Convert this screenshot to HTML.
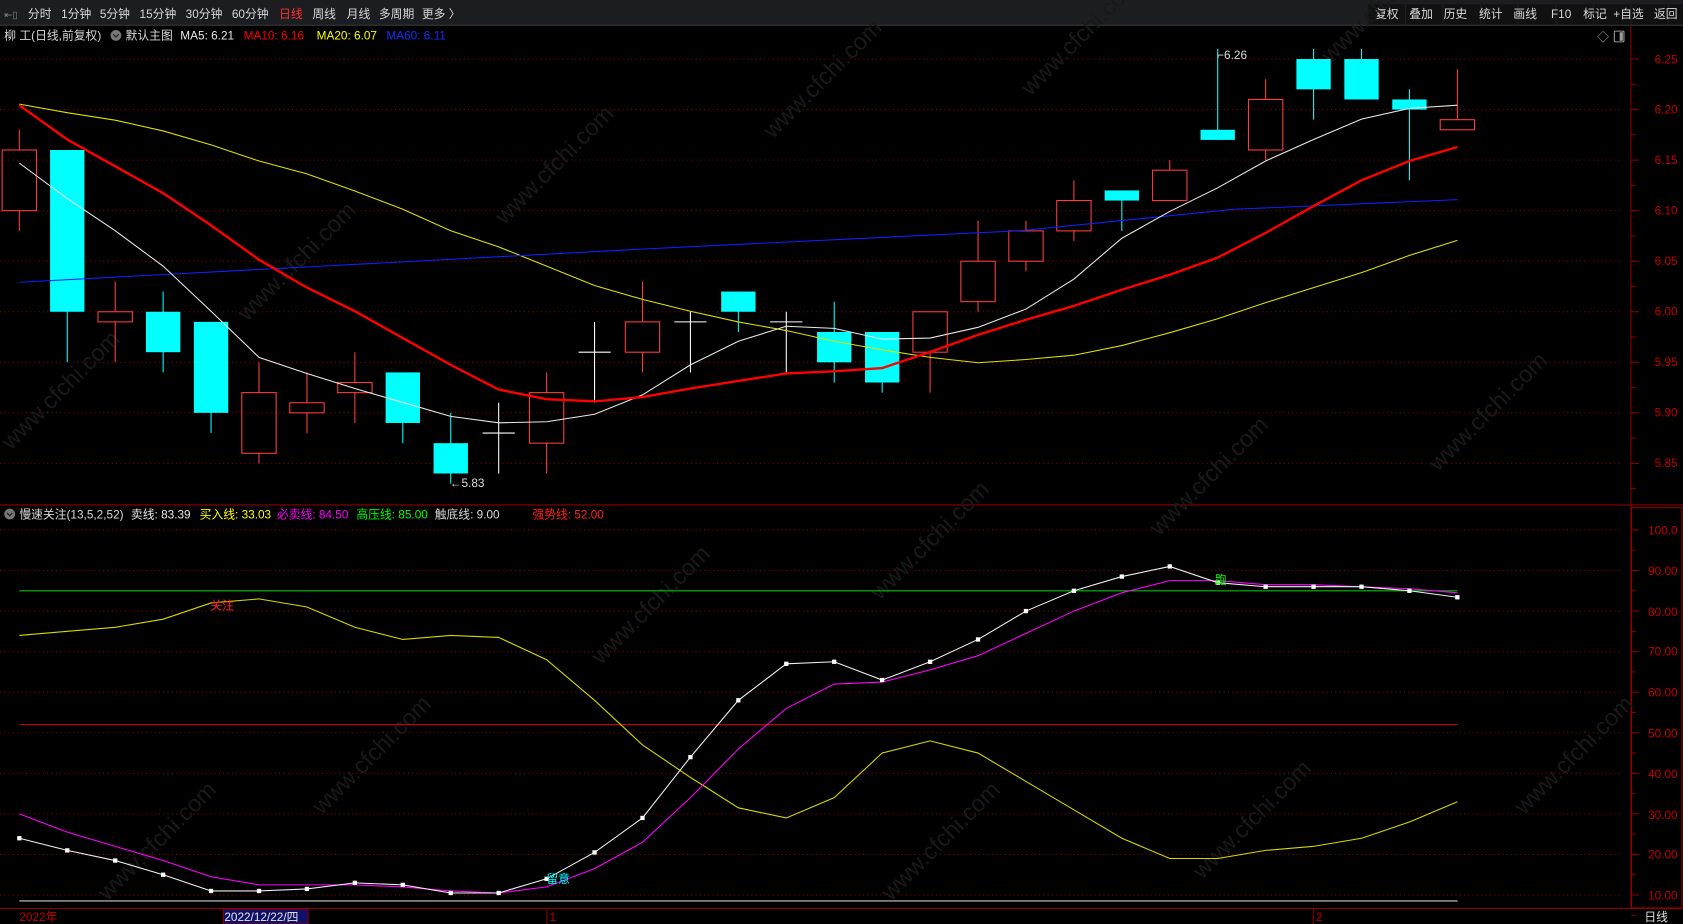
<!DOCTYPE html>
<html><head><meta charset="utf-8"><style>
html,body{margin:0;padding:0;background:#000;width:1683px;height:924px;overflow:hidden}
svg{display:block;overflow:hidden}
text{font-family:"Liberation Sans","Noto Sans CJK SC",sans-serif}
</style></head><body>
<svg id="s" width="1683" height="924" viewBox="0 0 1568 861" preserveAspectRatio="none" xmlns="http://www.w3.org/2000/svg">
<rect x="0" y="0" width="1568" height="861" fill="#000"/>
<rect x="0" y="0" width="1568" height="23" fill="#1c1d21"/>
<line x1="0" y1="23.5" x2="1568" y2="23.5" stroke="#3a3a3a"/>
<g fill="#111">
<rect x="1275" y="4" width="34" height="19"/><rect x="1310" y="4" width="34" height="19"/><rect x="1345" y="4" width="34" height="19"/><rect x="1380" y="4" width="34" height="19"/><rect x="1415" y="4" width="34" height="19"/><rect x="1450" y="4" width="34" height="19"/><rect x="1485" y="4" width="34" height="19"/><rect x="1520" y="4" width="34" height="19"/><rect x="1555" y="4" width="13" height="19"/>
</g>
<g font-size="11" fill="#d8d8d8">
<text x="4" y="17" fill="#888" font-size="9">⇤▯</text>
<text x="26" y="17">分时</text><text x="57" y="17">1分钟</text><text x="93" y="17">5分钟</text><text x="130" y="17">15分钟</text><text x="173" y="17">30分钟</text><text x="216" y="17">60分钟</text>
<text x="260" y="17" fill="#ff3030">日线</text><text x="291" y="17">周线</text><text x="323" y="17">月线</text><text x="353" y="17">多周期</text><text x="393" y="17">更多 〉</text>
<text x="1281" y="17">复权</text><text x="1313" y="17">叠加</text><text x="1345" y="17">历史</text><text x="1378" y="17">统计</text><text x="1410" y="17">画线</text><text x="1445" y="17">F10</text><text x="1475" y="17">标记</text><text x="1503" y="17">+自选</text><text x="1541" y="17">返回</text>
</g>
<g font-size="11">
<text x="4" y="37" fill="#d8d8d8">柳 工(日线,前复权)</text>
<circle cx="108" cy="33" r="5" fill="#777"/><path d="M105.5 32 L108 34.5 L110.5 32" stroke="#222" fill="none" stroke-width="1.2"/>
<text x="117" y="37" fill="#d8d8d8">默认主图</text>
<text x="168" y="37" fill="#e8e8e8">MA5: 6.21</text>
<text x="227" y="37" fill="#ff0000">MA10: 6.16</text>
<text x="295" y="37" fill="#ffff00">MA20: 6.07</text>
<text x="360" y="37" fill="#1030ff">MA60: 6.11</text>
<text x="1488" y="38" fill="#aaa" font-size="11">◇</text>
<rect x="1504" y="29" width="9" height="10" fill="none" stroke="#999" rx="1"/><rect x="1509" y="30" width="3" height="8" fill="#999"/>
</g>
<line x1="1519.5" y1="24" x2="1519.5" y2="846" stroke="#8b0000"/>
<line x1="0" y1="470.5" x2="1568" y2="470.5" stroke="#8b0000"/>
<rect x="1520" y="473" width="47" height="373" fill="none" stroke="#8b0000"/>
<line x1="0" y1="846.5" x2="1568" y2="846.5" stroke="#8b0000"/>
<g id="grid" stroke="#8b0000" stroke-dasharray="1 3"></g>
<g id="wm" font-size="22" fill="#191919"></g>
<g font-size="11" fill="#c00000" text-anchor="end">
<text x="1563" y="59">6.25</text><text x="1563" y="106">6.20</text><text x="1563" y="153">6.15</text><text x="1563" y="200">6.10</text><text x="1563" y="247">6.05</text><text x="1563" y="294">6.00</text><text x="1563" y="341">5.95</text><text x="1563" y="388">5.90</text><text x="1563" y="435">5.85</text>
<text x="1563" y="498">100.0</text><text x="1563" y="536">90.00</text><text x="1563" y="574">80.00</text><text x="1563" y="611">70.00</text><text x="1563" y="649">60.00</text><text x="1563" y="687">50.00</text><text x="1563" y="725">40.00</text><text x="1563" y="763">30.00</text><text x="1563" y="800">20.00</text><text x="1563" y="838">10.00</text>
</g>
<g id="ticks" stroke="#8b0000"></g>
<g id="price"></g>
<text x="419" y="454" font-size="11" fill="#ddd">←5.83</text>
<text x="1134" y="55" font-size="11" fill="#ddd">⌐6.26</text>
<g font-size="11">
<circle cx="9" cy="479" r="5" fill="#777"/><path d="M6.5 478 L9 480.5 L11.5 478" stroke="#222" fill="none" stroke-width="1.2"/>
<text x="18" y="483" fill="#d8d8d8">慢速关注(13,5,2,52)</text>
<text x="122" y="483" fill="#e8e8e8">卖线: 83.39</text>
<text x="186" y="483" fill="#ffff00">买入线: 33.03</text>
<text x="258" y="483" fill="#ff00ff">必卖线: 84.50</text>
<text x="332" y="483" fill="#00ff00">高压线: 85.00</text>
<text x="405" y="483" fill="#d8d8d8">触底线: 9.00</text>
<text x="496" y="483" fill="#ff2020">强势线: 52.00</text>
</g>
<g id="lower"></g>
<text x="196" y="568" font-size="11" fill="#ff2020">关注</text>
<text x="509" y="823" font-size="11" fill="#00ffff">留意</text>
<text x="1132" y="544" font-size="11" fill="#00ff00">跑</text>
<g font-size="11">
<text x="18" y="858" fill="#c00000">2022年</text>
<rect x="208" y="847" width="79" height="14" fill="#10106a" stroke="#8b0000"/>
<text x="209" y="858" fill="#e8e8e8">2022/12/22/四</text>
<line x1="509.5" y1="847" x2="509.5" y2="861" stroke="#8b0000"/><text x="512" y="858" fill="#c00000">1</text>
<line x1="1223.5" y1="847" x2="1223.5" y2="861" stroke="#8b0000"/><text x="1226" y="858" fill="#c00000">2</text>
<text x="1532" y="858" fill="#ddd">日线</text>
</g>
</svg>
<script>
var NS="http://www.w3.org/2000/svg";
function el(p,t,a){var e=document.createElementNS(NS,t);for(var k in a)e.setAttribute(k,a[k]);document.getElementById(p).appendChild(e);return e;}
function X(i){return 18+i*44.66;}
function Y(p){return 55+(6.25-p)/0.05*47.1;}
function L(v){return 834-(v-10)*3.78;}
for(var i=0;i<9;i++){var y=55+i*47.1;el('grid','line',{x1:0,y1:y,x2:1512,y2:y});el('ticks','line',{x1:1520,y1:y,x2:1527,y2:y});el('ticks','line',{x1:1520,y1:y+23.5,x2:1524,y2:y+23.5});}
for(var v=10;v<=100;v+=10){var y=L(v);el('grid','line',{x1:0,y1:y,x2:1512,y2:y});el('ticks','line',{x1:1520,y1:y,x2:1527,y2:y});el('ticks','line',{x1:1520,y1:y+18.9,x2:1524,y2:y+18.9});}
var wp=[[10,420],[230,300],[470,210],[720,130],[960,90],[1240,60],[300,760],[560,620],[820,560],[1080,500],[1340,440],[100,840],[830,840],[1120,820],[1420,760]];
wp.forEach(function(p){var t=el('wm','text',{x:p[0],y:p[1],transform:'rotate(-45 '+p[0]+' '+p[1]+')'});t.textContent='www.cfchi.com';});
var C=[[6.10,6.16,6.18,6.08],[6.16,6.00,6.16,5.95],[5.99,6.00,6.03,5.95],[6.00,5.96,6.02,5.94],[5.99,5.90,5.99,5.88],[5.86,5.92,5.95,5.85],[5.90,5.91,5.94,5.88],[5.92,5.93,5.96,5.89],[5.94,5.89,5.94,5.87],[5.87,5.84,5.90,5.83],[5.88,5.88,5.91,5.84],[5.87,5.92,5.94,5.84],[5.96,5.96,5.99,5.91],[5.96,5.99,6.03,5.94],[5.99,5.99,6.00,5.94],[6.02,6.00,6.02,5.98],[5.99,5.99,6.00,5.94],[5.98,5.95,6.01,5.93],[5.98,5.93,5.98,5.92],[5.96,6.00,6.00,5.92],[6.01,6.05,6.09,6.00],[6.05,6.08,6.09,6.04],[6.08,6.11,6.13,6.07],[6.12,6.11,6.12,6.08],[6.11,6.14,6.15,6.11],[6.18,6.17,6.26,6.17],[6.16,6.21,6.23,6.15],[6.25,6.22,6.26,6.19],[6.25,6.21,6.26,6.21],[6.21,6.20,6.22,6.13],[6.18,6.19,6.24,6.18]];
C.forEach(function(c,i){var x=X(i),o=c[0],cl=c[1];var w=32;
 if(Math.abs(o-cl)<0.001){el('price','line',{x1:x,y1:Y(c[2]),x2:x,y2:Y(c[3]),stroke:'#fff'});el('price','line',{x1:x-15,y1:Y(o),x2:x+15,y2:Y(o),stroke:'#fff'});}
 else if(cl>o){el('price','line',{x1:x,y1:Y(c[2]),x2:x,y2:Y(cl),stroke:'#ff3c3c'});el('price','line',{x1:x,y1:Y(o),x2:x,y2:Y(c[3]),stroke:'#ff3c3c'});el('price','rect',{x:x-w/2,y:Y(cl),width:w,height:Y(o)-Y(cl),fill:'none',stroke:'#ff3c3c'});}
 else{el('price','line',{x1:x,y1:Y(c[2]),x2:x,y2:Y(c[3]),stroke:'#00ffff'});el('price','rect',{x:x-w/2,y:Y(o),width:w,height:Math.max(Y(cl)-Y(o),1),fill:'#00ffff'});}
});
function pl(g,pts,col,w){el(g,'polyline',{points:pts.map(function(p){return p.join(',')}).join(' '),fill:'none',stroke:col,'stroke-width':w});}
function ser(a){return a.map(function(y,i){return [X(i),y];});}
pl('price',ser([97,105,112,122,135,150,162,178,195,215,230,248,266,279,290,300,308,318,326,333,338,335,331,322,310,297,282,268,254,238,224]),'#e0e000',1);
pl('price',[[18,263],[300,248],[600,232],[950,215],[1150,195],[1358,186]],'#1020ff',1);
pl('price',ser([152,185,215,248,290,333,348,362,375,388,394,393,386,368,340,318,304,306,316,315,305,288,260,222,197,175,150,130,111,101,98]),'#e8e8e8',1);
pl('price',ser([98,130,155,180,210,242,268,290,315,340,363,372,374,370,362,355,348,346,343,328,312,298,285,270,256,240,217,192,168,150,137]),'#ff0000',2.2);
el('lower','line',{x1:18,y1:L(85),x2:1358,y2:L(85),stroke:'#00c000'});
el('lower','line',{x1:18,y1:L(52),x2:1358,y2:L(52),stroke:'#e00000'});
el('lower','line',{x1:18,y1:839.5,x2:1358,y2:839.5,stroke:'#ccc'});
function lser(a){return a.map(function(v,i){return [X(i),L(v)];});}
pl('lower',lser([74,75,76,78,82,83,81,76,73,74,73.5,68,58,47,39,31.5,29,34,45,48,45,38,31,24,19,19,21,22,24,28,33]),'#d8d800',1);
pl('lower',lser([30,25.5,22,18.5,14.5,12.5,12.5,12.5,12,11,10.5,12,16.5,23,34,46,56,62,62.5,65.5,69,74.5,80,84.5,87.5,87.5,86.5,86.5,86,85.5,84.5]),'#ff00ff',1);
var wv=[24,21,18.5,15,11,11,11.5,13,12.5,10.5,10.5,14,20.5,29,44,58,67,67.5,63,67.5,73,80,85,88.5,91,87,86,86,86,85,83.4];
pl('lower',lser(wv),'#f0f0f0',1);
wv.forEach(function(v,i){el('lower','rect',{x:X(i)-2,y:L(v)-2,width:4,height:4,fill:'#fff'});});
</script>
</body></html>
